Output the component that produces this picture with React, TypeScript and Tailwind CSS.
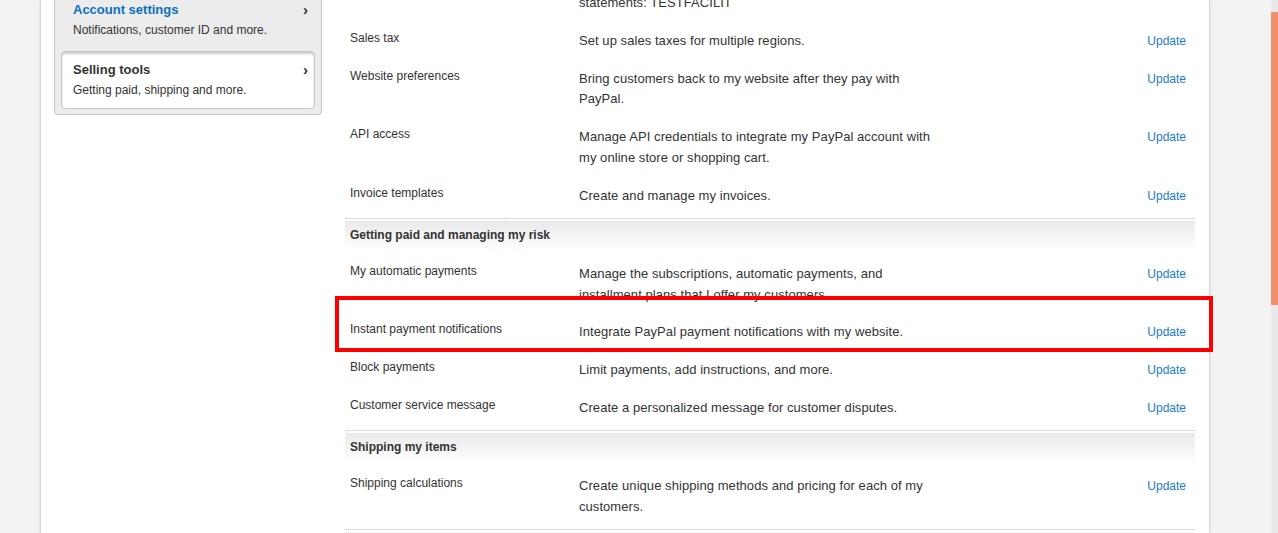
import React from 'react';

type Row = { label: string; desc: string; highlight?: boolean };
type Section = { title?: string; rows: Row[] };

const SECTIONS: Section[] = [
  {
    rows: [
      { label: 'Credit card statement name', desc: 'Change the name that appears on my customers\u2019 credit card statements: TESTFACILIT' },
      { label: 'Sales tax', desc: 'Set up sales taxes for multiple regions.' },
      { label: 'Website preferences', desc: 'Bring customers back to my website after they pay with PayPal.' },
      { label: 'API access', desc: 'Manage API credentials to integrate my PayPal account with my online store or shopping cart.' },
      { label: 'Invoice templates', desc: 'Create and manage my invoices.' },
    ],
  },
  {
    title: 'Getting paid and managing my risk',
    rows: [
      { label: 'My automatic payments', desc: 'Manage the subscriptions, automatic payments, and installment plans that I offer my customers.' },
      { label: 'Instant payment notifications', desc: 'Integrate PayPal payment notifications with my website.', highlight: true },
      { label: 'Block payments', desc: 'Limit payments, add instructions, and more.' },
      { label: 'Customer service message', desc: 'Create a personalized message for customer disputes.' },
    ],
  },
  {
    title: 'Shipping my items',
    rows: [
      { label: 'Shipping calculations', desc: 'Create unique shipping methods and pricing for each of my customers.' },
    ],
  },
];

const SettingRow: React.FC<{ row: Row }> = ({ row }) => (
  <div className="relative flex items-start pt-[8px] pb-[9px]">
    <div className="w-[229px] ml-[5px] text-[12px] leading-[15px] text-[#333]">{row.label}</div>
    <div className="w-[362px] text-[13px] leading-[20.8px] tracking-[0.06px] text-[#333]">{row.desc}</div>
    <div className="flex-1 text-right pr-[9px] text-[12px] leading-[21px]">
      <a href="#" className="text-[#1d7cc6] hover:underline">Update</a>
    </div>
    {row.highlight && (
      <div className="absolute -top-[18px] bottom-0 -left-[10px] -right-[18px] border-4 border-[#ff0000] pointer-events-none" />
    )}
  </div>
);

const Sidebar: React.FC = () => (
  <div className="w-[268px] flex-none self-start border border-t-0 border-[#c9c9c9] rounded-b-[4px] bg-[#ececec] px-[6px] pb-[5px]">
    <div className="pt-[2px] pl-[12px] pr-[7px]">
      <div className="flex items-center justify-between">
        <a href="#" className="text-[13px] leading-[16px] font-bold text-[#0b6fbf]">Account settings</a>
        <span className="text-[15px] leading-[16px] font-bold text-[#333]">›</span>
      </div>
      <div className="mt-[4px] text-[12px] leading-[16px] text-[#333]">Notifications, customer ID and more.</div>
    </div>
    <div className="mt-[13px] rounded-[4px] border border-[#c6c6c6] bg-white pt-[10px] pb-[10px] pl-[11px] pr-[6px] shadow-[inset_0_2px_2px_rgba(0,0,0,0.2)]">
      <div className="flex items-center justify-between">
        <span className="text-[13px] leading-[16px] font-bold text-[#333]">Selling tools</span>
        <span className="text-[15px] leading-[16px] font-bold text-[#333]">›</span>
      </div>
      <div className="mt-[4px] text-[12px] leading-[16px] text-[#333]">Getting paid, shipping and more.</div>
    </div>
  </div>
);

export default function App() {
  return (
    <div className="flex h-screen overflow-hidden bg-[#f3f3f3]" style={{ fontFamily: '"Liberation Sans", Arial, sans-serif' }}>
      <div className="w-[40px] flex-none" />
      <div className="w-[1170px] flex-none flex border-l border-r border-[#d9d9d9] bg-white pl-[13px] pr-[14px] shadow-[0_0_3px_rgba(0,0,0,0.12)]">
        <Sidebar />
        <div className="ml-[23px] w-[850px] -mt-[36px]">
          {SECTIONS.map((section, i) => (
            <div key={i}>
              {section.title && (
                <div className="mt-[2px] border-t border-dotted border-[#c4c4c4] pt-[2px]">
                  <div className="h-[30px] bg-linear-to-b from-[#e9e9e9] to-white pl-[5px] pt-[7px] text-[12px] leading-[14px] font-bold text-[#333]">
                    {section.title}
                  </div>
                </div>
              )}
              <div className={section.title ? 'mt-[5px]' : ''}>
                {section.rows.map((row) => (
                  <SettingRow key={row.label} row={row} />
                ))}
              </div>
            </div>
          ))}
          <div className="mt-[2px] border-t border-dotted border-[#c4c4c4]" />
        </div>
      </div>
      <div className="flex-1" />
      <div className="w-[7px] flex-none bg-[#e9e9e9] pt-[12px]">
        <div className="h-[293px] bg-[#f0906a]" />
      </div>
    </div>
  );
}
